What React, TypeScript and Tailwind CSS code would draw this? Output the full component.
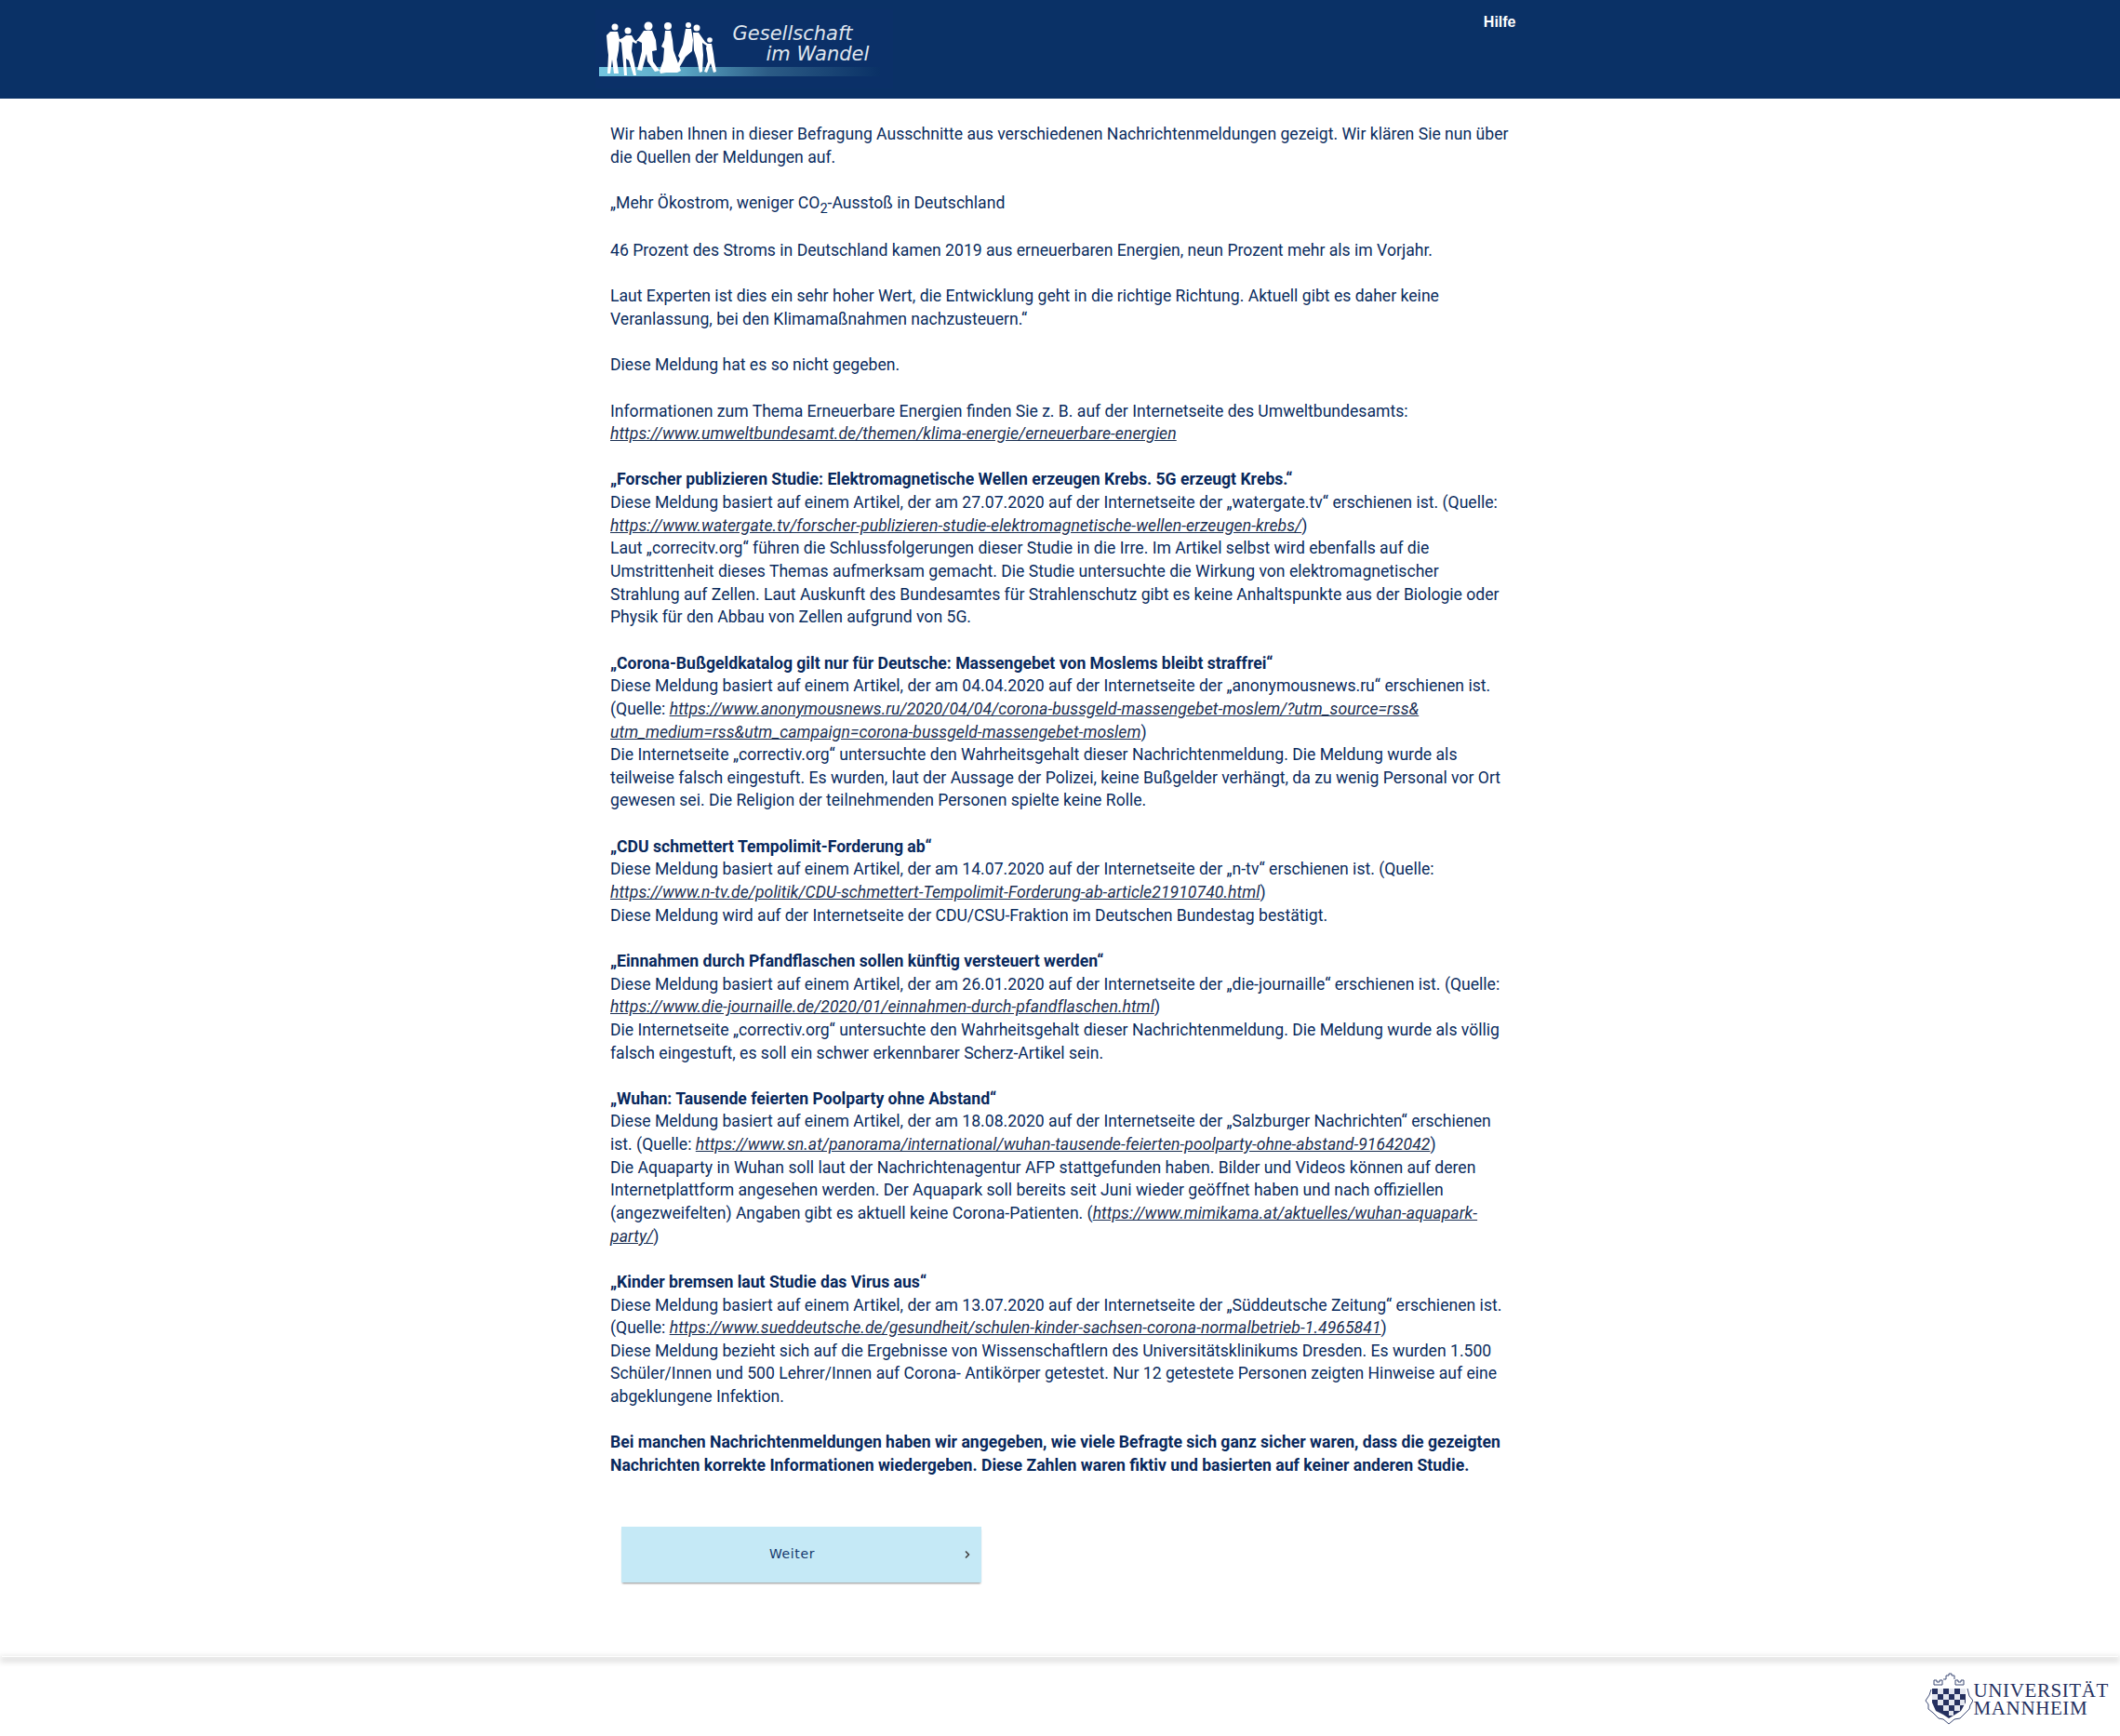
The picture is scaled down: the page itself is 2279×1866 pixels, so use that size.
import { ReactNode } from "react";
import { ChevronRight } from "lucide-react";

const Url = ({ children }: { children: ReactNode }) => (
  <a className="italic underline tracking-[0.07px] text-[#1b2f52]">{children}</a>
);

const Head = ({ children }: { children: ReactNode }) => (
  <b className="font-bold text-[#08285c]">{children}</b>
);

const Logo = () => (
  <div className="relative h-[85px] w-[320px] bg-[#0b3068]">
    <svg viewBox="0 0 320 85" className="absolute inset-0 h-full w-full">
      <defs>
        <linearGradient id="bar" x1="0" x2="1" y1="0" y2="0">
          <stop offset="0" stopColor="#74c6e0" />
          <stop offset="0.3" stopColor="#5aa6c4" />
          <stop offset="0.6" stopColor="#2c5c86" />
          <stop offset="1" stopColor="#0a3166" />
        </linearGradient>
      </defs>
      <rect x="4" y="62" width="302" height="10" fill="url(#bar)" />
      <g fill="#fff">
        <circle cx="21" cy="19" r="3.5" />
        <path d="M16 24h8l2 8-1 12-2 10 2 15h-5l-2-15-2 15h-3l1-20-1-8-1-13z" />
        <circle cx="35" cy="23" r="3.5" />
        <path d="M29 31l4-3h6l3 5 3 2-1 2-4-2-1 10 3 13 2 13h-3l-5-16-3-2 1 18h-3l-2-24-1-11-4-3z" />
        <circle cx="57" cy="18" r="4.5" />
        <path d="M52 23h9l4 10 1 11-5 1 1 11 7 10-5 1-8-11-1-8-5 18-5-1 5-20v-9l-4-2-3 1 5-6z" />
        <circle cx="78" cy="18" r="4" />
        <path d="M75 23h6l2 10 1 11 5 14 3 8-4 2h-12l-6 1-1-3 4-11 1-13-3-2 3-7z" />
        <circle cx="100" cy="17" r="3" />
        <path d="M97 21h6l2 12-1 12-7 6-4 7-3 5-2-3 3-7-2-3 5-12z" />
        <circle cx="109" cy="20" r="3.5" />
        <path d="M105 25h6l7 10 7 5-1 2-9-6 1 13-1 18-3 1-3-15-3-9z" />
        <circle cx="123" cy="33" r="2.8" />
        <path d="M120 37h5l2 11 1 8 2 11-3 1-3-10-4 10-3-1 4-11-1-9-1-5z" />
      </g>
    </svg>
    <div className="absolute left-[148px] top-[15px] font-['DejaVu_Sans'] text-[21px] italic leading-[23px] text-[#dfe5ee]">
      Gesellschaft
    </div>
    <div className="absolute left-[184px] top-[37px] font-['DejaVu_Sans'] text-[21px] italic leading-[23px] text-[#dfe5ee]">
      im Wandel
    </div>
  </div>
);

const Crest = () => (
  <svg viewBox="0 0 52 56" className="h-[56px] w-[52px]">
    <g fill="none" stroke="#3d4a75" strokeWidth="1">
      <path d="M10 13v-5h3v2h3v-2h3v5M10 13h9M20 7h3V3h3V1h3v2h3v4M33 13V8h3v2h3V8h3v5h-9" />
      <path d="M7 18l-2 6-4 6 3 4v5l5 4 6 6 5 1 6 5 6-5 6-1 5-5 5-5 1-4 3-5-4-5-2-8" />
    </g>
    <path d="M8 17h36v15l-5 9-8 5-5 3-6-4-8-4-4-9z" fill="#25305f" />
    <g fill="#e3e6ef">
      <rect x="14" y="17" width="6" height="6" />
      <rect x="26" y="17" width="6" height="6" />
      <rect x="38" y="17" width="6" height="6" />
      <rect x="8" y="23" width="6" height="6" />
      <rect x="20" y="23" width="6" height="6" />
      <rect x="32" y="23" width="6" height="6" />
      <rect x="14" y="29" width="6" height="6" />
      <rect x="26" y="29" width="6" height="6" />
      <rect x="38" y="29" width="5" height="6" />
      <rect x="20" y="35" width="6" height="6" />
      <rect x="32" y="35" width="6" height="6" />
      <rect x="26" y="41" width="5" height="5" />
    </g>
  </svg>
);

export default function App() {
  return (
    <div className="min-h-[1866px] bg-white font-['Roboto',sans-serif] text-[17.6px] leading-[24.64px] text-[#0a2c5e]">
      <header className="h-[106px] bg-[#0a3166]">
        <div className="mx-auto flex w-[990px] items-start justify-between pr-[5px]">
          <div className="-ml-[5px] pt-[10px]">
            <Logo />
          </div>
          <a className="pt-[14px] font-['Liberation_Sans',sans-serif] text-[16px] font-bold leading-[20px] text-white">
            Hilfe
          </a>
        </div>
      </header>

      <main className="mx-auto h-[1674px] w-[990px]">
        <div className="ml-[11.5px] w-[967px] pt-[26px]">
          <p>
            Wir haben Ihnen in dieser Befragung Ausschnitte aus verschiedenen Nachrichtenmeldungen gezeigt. Wir klären Sie nun über die Quellen der Meldungen auf.
            <br />
            <br />
            „Mehr Ökostrom, weniger CO<sub className="static align-sub text-[14.6px] leading-[normal]">2</sub>-Ausstoß in Deutschland
            <br />
            <br />
            46 Prozent des Stroms in Deutschland kamen 2019 aus erneuerbaren Energien, neun Prozent mehr als im Vorjahr.
            <br />
            <br />
            Laut Experten ist dies ein sehr hoher Wert, die Entwicklung geht in die richtige Richtung. Aktuell gibt es daher keine Veranlassung, bei den Klimamaßnahmen nachzusteuern.“
            <br />
            <br />
            Diese Meldung hat es so nicht gegeben.
            <br />
            <br />
            Informationen zum Thema Erneuerbare Energien finden Sie z. B. auf der Internetseite des Umweltbundesamts:
            <br />
            <Url>https://www.umweltbundesamt.de/themen/klima-energie/erneuerbare-energien</Url>
            <br />
            <br />
            <Head>„Forscher publizieren Studie: Elektromagnetische Wellen erzeugen Krebs. 5G erzeugt Krebs.“</Head>
            <br />
            Diese Meldung basiert auf einem Artikel, der am 27.07.2020 auf der Internetseite der „watergate.tv“ erschienen ist. (Quelle: <Url>https://www.watergate.tv/forscher-publizieren-studie-elektromagnetische-wellen-erzeugen-krebs/</Url>)
            <br />
            Laut „correcitv.org“ führen die Schlussfolgerungen dieser Studie in die Irre. Im Artikel selbst wird ebenfalls auf die Umstrittenheit dieses Themas aufmerksam gemacht. Die Studie untersuchte die Wirkung von elektromagnetischer Strahlung auf Zellen. Laut Auskunft des Bundesamtes für Strahlenschutz gibt es keine Anhaltspunkte aus der Biologie oder Physik für den Abbau von Zellen aufgrund von 5G.
            <br />
            <br />
            <Head>„Corona-Bußgeldkatalog gilt nur für Deutsche: Massengebet von Moslems bleibt straffrei“</Head>
            <br />
            Diese Meldung basiert auf einem Artikel, der am 04.04.2020 auf der Internetseite der „anonymousnews.ru“ erschienen ist. (Quelle: <Url>https://www.anonymousnews.ru/2020/04/04/corona-bussgeld-massengebet-moslem/?utm_source=rss&amp;<wbr />utm_medium=rss&amp;utm_campaign=corona-bussgeld-massengebet-moslem</Url>)
            <br />
            Die Internetseite „correctiv.org“ untersuchte den Wahrheitsgehalt dieser Nachrichtenmeldung. Die Meldung wurde als teilweise falsch eingestuft. Es wurden, laut der Aussage der Polizei, keine Bußgelder verhängt, da zu wenig Personal vor Ort gewesen sei. Die Religion der teilnehmenden Personen spielte keine Rolle.
            <br />
            <br />
            <Head>„CDU schmettert Tempolimit-Forderung ab“</Head>
            <br />
            Diese Meldung basiert auf einem Artikel, der am 14.07.2020 auf der Internetseite der „n-tv“ erschienen ist. (Quelle: <Url>https://www.n-tv.de/politik/CDU-schmettert-Tempolimit-Forderung-ab-article21910740.html</Url>)
            <br />
            Diese Meldung wird auf der Internetseite der CDU/CSU-Fraktion im Deutschen Bundestag bestätigt.
            <br />
            <br />
            <Head>„Einnahmen durch Pfandflaschen sollen künftig versteuert werden“</Head>
            <br />
            Diese Meldung basiert auf einem Artikel, der am 26.01.2020 auf der Internetseite der „die-journaille“ erschienen ist. (Quelle: <Url>https://www.die-journaille.de/2020/01/einnahmen-durch-pfandflaschen.html</Url>)
            <br />
            Die Internetseite „correctiv.org“ untersuchte den Wahrheitsgehalt dieser Nachrichtenmeldung. Die Meldung wurde als völlig falsch eingestuft, es soll ein schwer erkennbarer Scherz-Artikel sein.
            <br />
            <br />
            <Head>„Wuhan: Tausende feierten Poolparty ohne Abstand“</Head>
            <br />
            Diese Meldung basiert auf einem Artikel, der am 18.08.2020 auf der Internetseite der „Salzburger Nachrichten“ erschienen ist. (Quelle: <Url>https://www.sn.at/panorama/international/wuhan-tausende-feierten-poolparty-ohne-abstand-91642042</Url>)
            <br />
            Die Aquaparty in Wuhan soll laut der Nachrichtenagentur AFP stattgefunden haben. Bilder und Videos können auf deren Internetplattform angesehen werden. Der Aquapark soll bereits seit Juni wieder geöffnet haben und nach offiziellen (angezweifelten) Angaben gibt es aktuell keine Corona-Patienten. (<Url>https://www.mimikama.at/aktuelles/wuhan-aquapark-party/</Url>)
            <br />
            <br />
            <Head>„Kinder bremsen laut Studie das Virus aus“</Head>
            <br />
            Diese Meldung basiert auf einem Artikel, der am 13.07.2020 auf der Internetseite der „Süddeutsche Zeitung“ erschienen ist. (Quelle: <Url>https://www.sueddeutsche.de/gesundheit/schulen-kinder-sachsen-corona-normalbetrieb-1.4965841</Url>)
            <br />
            Diese Meldung bezieht sich auf die Ergebnisse von Wissenschaftlern des Universitätsklinikums Dresden. Es wurden 1.500 Schüler/Innen und 500 Lehrer/Innen auf Corona- Antikörper getestet. Nur 12 getestete Personen zeigten Hinweise auf eine abgeklungene Infektion.
            <br />
            <br />
            <Head>Bei manchen Nachrichtenmeldungen haben wir angegeben, wie viele Befragte sich ganz sicher waren, dass die gezeigten Nachrichten korrekte Informationen wiedergeben. Diese Zahlen waren fiktiv und basierten auf keiner anderen Studie.</Head>
          </p>

          <button className="relative ml-[12px] mt-[53px] flex h-[60px] w-[387px] items-center justify-center bg-[#c5e9f6] pr-[20px] font-['DejaVu_Sans',sans-serif] text-[14px] tracking-[0.6px] text-[#14386c] shadow-[0_2px_2px_-1px_rgba(0,0,0,0.45)]">
            Weiter
            <ChevronRight size={12} strokeWidth={3.5} className="absolute right-[9px] top-[24px] text-[#444]" />
          </button>
        </div>
      </main>

      <div className="mx-[2px] h-[1px] shadow-[0_3px_6px_2px_rgba(0,0,0,0.16)]" />

      <footer className="flex h-[85px] items-start justify-end pr-[12px] pt-[17px]">
        <div className="flex items-center gap-[1px] font-['Liberation_Serif',serif] text-[#26315f]">
          <Crest />
          <div className="pt-[2px] text-[21px] leading-[19px]">
            <div className="tracking-[0.6px]">UNIVERSITÄT</div>
            <div className="tracking-[0.6px]">MANNHEIM</div>
          </div>
        </div>
      </footer>
    </div>
  );
}
